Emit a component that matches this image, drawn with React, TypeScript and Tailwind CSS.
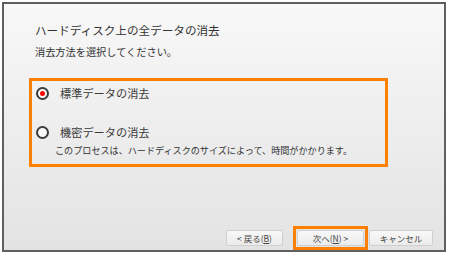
import React from "react";

const jp = { fontFamily: '"Noto Sans CJK JP", "Noto Sans", sans-serif' };

function Radio({ checked }: { checked?: boolean }) {
  return (
    <span className="flex h-[13px] w-[13px] items-center justify-center rounded-full border-[2px] border-[#3a3a3a] bg-[#fafafa]">
      {checked && <span className="h-[5px] w-[5px] rounded-full bg-[#ff0000]" />}
    </span>
  );
}

function Btn({ children, w }: { children: React.ReactNode; w: string }) {
  return (
    <div
      className={`${w} flex h-[16px] items-center justify-center rounded-[2px] border border-[#cfcfcf] bg-gradient-to-b from-[#f8f8f8] to-[#ebebeb] text-[8.5px] text-[#444]`}
    >
      {children}
    </div>
  );
}

export default function App() {
  return (
    <div className="h-[256px] w-[450px] bg-white p-[2px]" style={jp}>
      <div className="flex h-[250px] w-[444px] flex-col border-2 border-[#5f5f5f] bg-gradient-to-b from-[#f8f8f8] to-[#e3e3e3]">
        <div className="ml-[31px] mt-[16px] text-[11.6px] leading-[20px] text-[#333]">
          ハードディスク上の全データの消去
        </div>
        <div className="ml-[31px] mt-[5px] text-[10.2px] leading-[14px] text-[#333]">
          消去方法を選択してください。
        </div>

        <div className="ml-[25px] mt-[19px] h-[89px] w-[359px] border-[3px] border-[#ff8000] pt-[4px]">
          <div className="flex h-[16px] items-center">
            <span className="ml-[4px]">
              <Radio checked />
            </span>
            <span className="ml-[11px] text-[11.2px] text-[#3a3a3a]">標準データの消去</span>
          </div>
          <div className="mt-[23px] flex h-[16px] items-center">
            <span className="ml-[4px]">
              <Radio />
            </span>
            <span className="ml-[11px] text-[11.2px] text-[#3a3a3a]">機密データの消去</span>
          </div>
          <div className="mt-[4px] pl-[23px] text-[9.1px] leading-[12px] text-[#333]">
            このプロセスは、ハードディスクのサイズによって、時間がかかります。
          </div>
        </div>

        <div className="flex-1" />

        <div className="flex h-[24px] items-center justify-end pr-[11px]">
          <Btn w="w-[57px]">
            &lt; 戻る(<span className="underline">B</span>)
          </Btn>
          <div className="ml-[10px] flex h-[24px] w-[75px] items-center justify-center border-[3px] border-[#ff8000]">
            <Btn w="w-[67px]">
              次へ(<span className="underline">N</span>) &gt;
            </Btn>
          </div>
          <div className="ml-[1px]">
            <Btn w="w-[64px]">キャンセル</Btn>
          </div>
        </div>
      </div>
    </div>
  );
}
